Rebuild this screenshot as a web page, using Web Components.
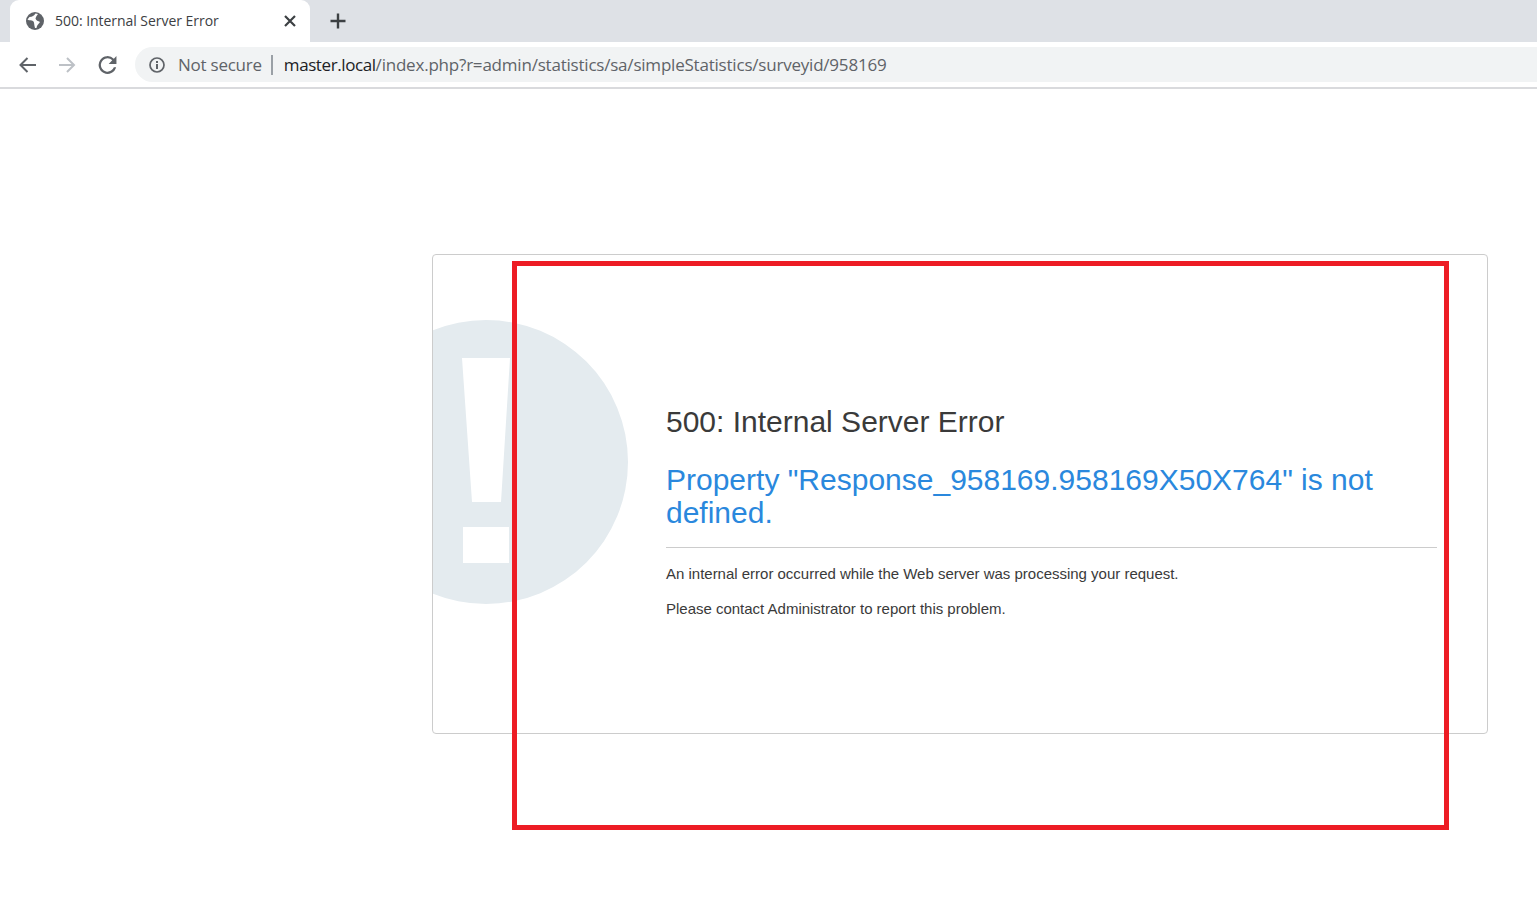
<!DOCTYPE html>
<html>
<head>
<meta charset="utf-8">
<title>500: Internal Server Error</title>
<style>
  html, body { margin: 0; padding: 0; background: #fff; }
  body { height: 908px; overflow: hidden; position: relative; font-family: "Liberation Sans", Arial, sans-serif; }
</style>
</head>
<body>
<browser-chrome tab-title="500: Internal Server Error" host="master.local" path="/index.php?r=admin/statistics/sa/simpleStatistics/surveyid/958169"></browser-chrome>
<error-panel heading="500: Internal Server Error" message="Property &quot;Response_958169.958169X50X764&quot; is not defined.">
  <p>An internal error occurred while the Web server was processing your request.</p>
  <p>Please contact Administrator to report this problem.</p>
</error-panel>
<red-frame></red-frame>

<script>
class BrowserChrome extends HTMLElement {
  connectedCallback() {
    const title = this.getAttribute('tab-title');
    const host = this.getAttribute('host');
    const path = this.getAttribute('path');
    this.attachShadow({ mode: 'open' });
    this.shadowRoot.innerHTML = `
      <style>
        :host {
          display: block;
          font-family: "Open Sans", "Noto Sans", sans-serif;
          border-bottom: 2px solid #d9dadd;
        }
        .strip {
          height: 42px;
          background: #dee1e6;
          display: flex;
          align-items: stretch;
          padding-left: 10px;
        }
        .tab {
          width: 300px;
          box-sizing: border-box;
          background: #fff;
          border-radius: 9px 9px 0 0;
          display: flex;
          align-items: center;
          padding: 0 12px 0 16px;
          color: #3c4043;
          font-size: 14px;
          letter-spacing: -0.04px;
        }
        .tab .title { margin-left: 11px; flex: 1; white-space: nowrap; position: relative; top: -1px; }
        .new { margin-left: 19px; display: flex; align-items: center; }
        .bar {
          height: 45px;
          box-sizing: border-box;
          background: #fff;
          display: flex;
          align-items: center;
          padding: 0 0 0 17px;
        }
        .nav { display: flex; gap: 20px; }
        .nav svg { display: block; }
        .omni {
          margin-left: 18px;
          flex: 1;
          height: 35px;
          background: #f1f3f4;
          border-radius: 18px 0 0 18px;
          display: flex;
          align-items: center;
          padding-left: 13px;
          font-size: 17px;
          letter-spacing: -0.24px;
          white-space: nowrap;
        }
        .insecure { color: #5f6368; margin-left: 12px; }
        .sep { width: 2px; height: 20px; background: #9aa0a6; margin: 0 11px 0 9px; }
        .host { color: #202124; letter-spacing: -0.41px; }
        .path { color: #5f6368; letter-spacing: -0.21px; }
      </style>
      <div class="strip">
        <div class="tab">
          <svg width="18" height="18" viewBox="0 0 18 18">
            <circle cx="9" cy="9" r="9" fill="#5f6368"/>
            <path fill="#fff" d="M1.500 7.500C3.500 9 5.500 8 7 9c1.500 1 1 4 2 7h1.500c.3-3 2.500-4.500 3.500-6-2-1-4-1.500-4.500-3.500.5-2 1.500-3 2.500-4.500L9.500 1.500C8 3.500 6.500 5 3.500 5z"/>
          </svg>
          <span class="title">${title}</span>
          <svg width="16" height="16" viewBox="0 0 16 16"><path stroke="#3c4043" stroke-width="2.200" d="M3 3l10 10M13 3L3 13"/></svg>
        </div>
        <div class="new">
          <svg width="18" height="18" viewBox="0 0 18 18"><path stroke="#3c4043" stroke-width="2.400" d="M9 1.500v15M1.500 9h15"/></svg>
        </div>
      </div>
      <div class="bar">
        <div class="nav">
          <svg width="20" height="20" viewBox="0 0 20 20" fill="none" stroke="#5f6368" stroke-width="2"><path d="M19 10H4M10.500 3l-7 7 7 7"/></svg>
          <svg width="20" height="20" viewBox="0 0 20 20" fill="none" stroke="#bdc1c6" stroke-width="2"><path d="M2 10h15M10 3l7 7-7 7"/></svg>
          <svg width="20" height="20" viewBox="2.500 3 18 18"><path fill="#5f6368" d="M17.650 6.350A8 8 0 1 0 19.730 14h-2.080A6 6 0 1 1 12 6c1.660 0 3.140.69 4.220 1.780L13 11h7V4l-2.350 2.350z"/></svg>
        </div>
        <div class="omni">
          <svg width="18" height="18" viewBox="0 0 18 18" fill="none"><circle cx="9" cy="9" r="7" stroke="#5f6368" stroke-width="1.700"/><path stroke="#5f6368" stroke-width="2" d="M9 8v5M9 5v2"/></svg>
          <span class="insecure">Not secure</span>
          <span class="sep"></span>
          <span class="host">${host}</span><span class="path">${path}</span>
        </div>
      </div>
    `;
  }
}

class ErrorPanel extends HTMLElement {
  connectedCallback() {
    this.attachShadow({ mode: 'open' });
    this.shadowRoot.innerHTML = `
      <style>
        :host {
          display: flex;
          width: 1056px;
          height: 480px;
          box-sizing: border-box;
          margin: 165px 0 0 432px;
          border: 1px solid #ccc;
          border-radius: 4px;
          overflow: hidden;
          color: #333;
          font-family: "Liberation Sans", Arial, sans-serif;
        }
        .side { width: 233px; flex: none; padding-top: 65px; }
        .side svg { display: block; filter: blur(0.4px); }
        .main { flex: 1; padding: 150px 50px 0 0; }
        h2 { margin: 0; font-size: 30px; font-weight: 400; line-height: 33px; color: #3a3a3a; }
        h3 { margin: 25px 0 0; font-size: 30px; font-weight: 400; line-height: 33px; color: #2a88dd; }
        hr { border: 0; border-top: 1px solid #ccc; margin: 18px 0 0; }
        .notes { display: block; margin-top: 16px; font-size: 15px; line-height: 20px; letter-spacing: -0.01px; color: #3a3a3a; }
        ::slotted(p) { margin: 0 0 15px; }
      </style>
      <div class="side">
        <svg width="196" height="286" viewBox="0 0 196 286">
          <path fill="#e4ebef" fill-rule="evenodd" d="M53 0a142 142 0 1 1 0 284a142 142 0 1 1 0-284zM29 38h48l-9 144H39zM30 207h46v36H30z"/>
        </svg>
      </div>
      <div class="main">
        <h2>${this.getAttribute('heading')}</h2>
        <h3>${this.getAttribute('message')}</h3>
        <hr>
        <div class="notes"><slot></slot></div>
      </div>
    `;
  }
}

class RedFrame extends HTMLElement {
  connectedCallback() {
    this.attachShadow({ mode: 'open' });
    this.shadowRoot.innerHTML = `
      <style>
        :host {
          position: absolute;
          left: 512px;
          top: 261px;
          width: 937px;
          height: 569px;
          box-sizing: border-box;
          border: 5px solid #ed1c24;
        }
      </style>
    `;
  }
}

customElements.define('browser-chrome', BrowserChrome);
customElements.define('error-panel', ErrorPanel);
customElements.define('red-frame', RedFrame);
</script>
</body>
</html>
